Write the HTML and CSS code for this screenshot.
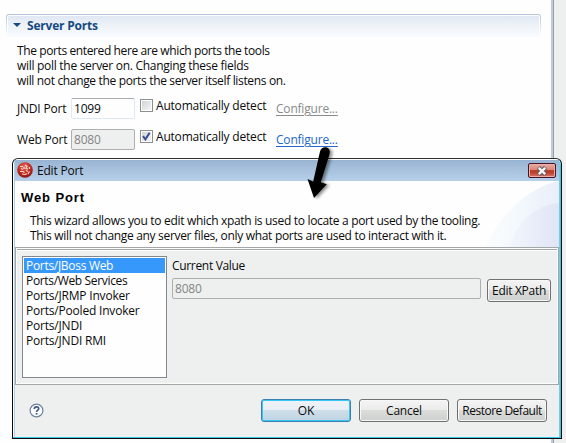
FILE: index.html
```html
<!DOCTYPE html>
<html lang="en">
<head>
<meta charset="utf-8">
<title>Server Ports</title>
<link rel="stylesheet" href="styles.css">
</head>
<body>
<main class="editor">
  <section class="ports">
    <h1 class="section-title"><span class="twistie"></span><span>Server Ports</span></h1>
    <p class="intro"><span class="tight">The ports entered here are which ports the tools</span><br><span class="snug">will poll the server on. Changing these fields</span><br><span class="close-set">will not change the ports the server itself listens on.</span></p>
    <div class="row">
      <span class="label">JNDI Port</span>
      <span class="field">1099</span>
      <span class="check"></span>
      <span class="auto">Automatically detect</span>
      <a class="link muted">Configure...</a>
    </div>
    <div class="row">
      <span class="label">Web Port</span>
      <span class="field disabled">8080</span>
      <span class="check"><svg width="9" height="9" viewBox="0 0 9 9"><path d="M1 4.2 3.4 7.4 7.6 .8" fill="none" stroke="#3a4f93" stroke-width="2"/></svg></span>
      <span class="auto">Automatically detect</span>
      <a class="link">Configure...</a>
    </div>
  </section>
</main>

<div class="dialog">
  <div class="frame">
    <header class="titlebar">
      <svg class="logo" width="16" height="16" viewBox="0 0 16 16"><defs><radialGradient id="ball" cx=".45" cy=".3" r=".7"><stop offset="0" stop-color="#e8705f"/><stop offset=".55" stop-color="#c52c22"/><stop offset="1" stop-color="#8d1712"/></radialGradient></defs><circle cx="8" cy="8" r="7.8" fill="url(#ball)"/><path d="M3 4.500h3M4 6.500l2 1M3 9.500h3l1.500 1M8 3l2 1.500-1 2 2 .5M12.500 5v2M9 8.500l2 1M12.500 9.500l-1.500 2.500M5 12l3 .5 2-.8M7 5v2" fill="none" stroke="#f8d8cf" stroke-width="1.200"/></svg>
      <span class="caption">Edit Port</span>
      <span class="close"><svg width="12" height="10" viewBox="0 0 12 10"><path d="M2.500 1.500 9.500 8.500M9.500 1.500 2.500 8.500" stroke="#565c6b" stroke-width="4.400"/><path d="M2.800 1.800 9.200 8.200M9.200 1.800 2.800 8.200" stroke="#f5f5f1" stroke-width="2.400"/></svg></span>
    </header>
    <section class="banner">
      <svg class="swoosh" width="74" height="66" viewBox="0 0 74 66"><defs><linearGradient id="s1"><stop offset="0" stop-color="#fafdfe"/><stop offset=".5" stop-color="#f3f8fd"/><stop offset="1" stop-color="#e9eef9"/></linearGradient><linearGradient id="s2"><stop offset="0" stop-color="#f1f6fd"/><stop offset="1" stop-color="#e0e4f4"/></linearGradient></defs><path d="M0 66C14 36 42 6 74 0V66Z" fill="url(#s1)"/><path d="M25 66C31 42 48 25 74 22V66Z" fill="url(#s2)"/></svg>
      <h2 class="heading">Web Port</h2>
      <p class="about"><span>This wizard allows you to edit which xpath is used to locate a port used by the tooling.</span><br><span>This will not change any server files, only what ports are used to interact with it.</span></p>
    </section>
    <section class="body">
      <ul class="list">
        <li class="selected">Ports/JBoss Web</li>
        <li class="close-set">Ports/Web Services</li>
        <li>Ports/JRMP Invoker</li>
        <li>Ports/Pooled Invoker</li>
        <li>Ports/JNDI</li>
        <li>Ports/JNDI RMI</li>
      </ul>
      <div class="value">
        <div class="value-label">Current Value</div>
        <div class="value-row"><span class="field disabled">8080</span><span class="button edit">Edit XPath</span></div>
      </div>
    </section>
    <footer class="actions">
      <svg class="help" width="15" height="15" viewBox="0 0 15 15"><circle cx="7.500" cy="7.500" r="6.400" fill="#fafcfe" stroke="#70819f" stroke-width="1.200"/><path d="M5.300 5.900C5.300 3.200 9.700 3.200 9.700 5.700 9.700 7.200 7.600 7.200 7.600 9" fill="none" stroke="#435a86" stroke-width="1.700"/><path d="M6.700 10h1.800v1.600H6.700z" fill="#435a86"/></svg>
      <span class="button ok">OK</span>
      <span class="button cancel">Cancel</span>
      <span class="button restore">Restore Default</span>
    </footer>
  </div>
</div>

<svg class="arrow" width="40" height="60" viewBox="0 0 40 60"><defs><filter id="sh" x="-30%" y="-30%" width="170%" height="170%"><feDropShadow dx="2.500" dy="1" stdDeviation="1.500" flood-color="#000" flood-opacity=".45"/></filter></defs><g filter="url(#sh)"><path d="M24 11.500C25 7 30 6 32.500 8.500 34.200 10.500 34 12.500 33.300 15L24.800 42.200 30.800 44.200 18 58 11.500 39 17.200 41.500Z" fill="#050505"/></g></svg>
</body>
</html>
```
FILE: styles.css
```css
* { box-sizing: border-box; }
body {
  margin: 0;
  width: 566px;
  height: 443px;
  overflow: hidden;
  position: relative;
  background: #eef0ef;
  color: #0b0b0b;
  font: 12px/15px "Open Sans", "Noto Sans", sans-serif;
  letter-spacing: -0.2px;
  white-space: nowrap;
}
h1, h2, p, ul { margin: 0; padding: 0; font-size: inherit; }
.snug { letter-spacing: -0.29px; }
.close-set { letter-spacing: -0.34px; }
.tight { letter-spacing: -0.39px; }
.editor {
  width: 554px;
  height: 443px;
  background: #fefefe;
  border-right: 1px solid #9a9fa3;
  box-shadow: inset -2px 0 #c0cbe0;
  padding: 14px 12px 0 6px;
}
.section-title {
  display: flex;
  align-items: center;
  height: 23px;
  border: 1px solid transparent;
  border-top-color: #b4c5df;
  border-bottom: 0;
  border-radius: 3px 3px 0 0;
  background: linear-gradient(#dfe6f2, #eef3f8 50%, #f8fbff) padding-box, linear-gradient(#b4c5df, #fefefe) border-box;
  box-shadow: inset 0 1px #fefefe, inset -1px 0 #fefefe, inset 1px 0 #fefefe;
  color: #164a80;
  font-weight: 700;
  padding: 0 0 2px 6px;
}
.twistie {
  width: 8px;
  height: 4px;
  margin-right: 6px;
  background: #164a80;
  clip-path: polygon(0 0, 100% 0, 50% 100%);
}
.intro { padding: 6px 0 0 11px; }
.row {
  display: grid;
  grid-template-columns: 54px 64px 13px 120px 70px;
  align-items: start;
  height: 31px;
  padding-left: 11px;
}
.intro + .row { margin-top: 10px; }
.label { padding-top: 3px; }
.field {
  height: 21px;
  border: 1px solid #dfe8f6;
  border-top-color: #abadb3;
  border-radius: 2px;
  padding: 2px 0 0 2px;
  background: #fefefe;
}
.disabled { background: #eef0ef; border-color: #afafaf; color: #858585; }
.check {
  width: 13px;
  height: 13px;
  margin: 1px 0 0 5px;
  border: 1px solid #8e8f8f;
  background: linear-gradient(135deg, #cfd3d7, #f6f6f6) content-box #f4f4f4;
  padding: 1px;
  display: flex;
}
.auto { padding-left: 8px; }
.link { color: #2267c9; text-decoration: underline; text-underline-offset: 2px; padding: 3px 0 0 8px; }
.muted { color: #8a8a8a; }

.dialog {
  position: absolute;
  left: 12px;
  top: 158px;
  width: 550px;
  height: 281px;
  border: 1px solid #090909;
  border-radius: 6px 6px 0 0;
  background: linear-gradient(90deg, #fafeff 0 1px, #b5d0eb 1px 2px, #b5d0eb 546px, #35c8e8 547px);
  border-top-color: #303030;
  padding: 1px 2px 2px;
  box-shadow: inset 0 -1px #35c8e8, inset 0 1px #fafeff;
  overflow: hidden;
}
.frame { height: 276px; }
.titlebar {
  display: flex;
  height: 21px;
  padding: 2px 2px 0;
  background: linear-gradient(#99b4d3, #b7d0ea);
}
.caption { margin-left: 4px; padding-top: 1px; }
.close {
  display: flex;
  align-items: center;
  justify-content: center;
  width: 28px;
  height: 15px;
  margin: 1px 1px 0 auto;
  border: 1px solid #471329;
  border-radius: 2px;
  background: linear-gradient(#e8aaa1, #d98778 45%, #bd3f28 46%, #bd3f28 65%, #d7776a);
  box-shadow: inset 0 0 0 1px #e8b0a6;
}
.banner { position: relative; height: 66px; background: #fefefe; padding: 8px 0 0 6px; }
.swoosh { position: absolute; right: 0; top: 0; }
.heading {
  position: relative;
  font: 700 13px/17px "Liberation Sans", sans-serif;
  letter-spacing: .9px;
  color: #000;
}
.about { position: relative; padding: 7px 0 0 9px; letter-spacing: -0.315px; }
.body {
  display: flex;
  height: 138px;
  border: 1px solid #a5a7a6;
  background: #eef0ef;
  box-shadow: inset 0 0 0 1px #fdfdfd, inset 0 2px #a5a7a6, inset 0 3px #fdfdfd;
  padding: 8px 7px 0 6px;
  gap: 5px;
}
.list {
  list-style: none;
  width: 145px;
  height: 122px;
  border: 1px solid #828790;
  background: #fefefe;
  padding: 1px;
}
.list li { height: 15px; padding-left: 2px; }
.selected { background: #3798fb; color: #fefefe; letter-spacing: -0.3px; }
.value { flex: 1; padding-top: 2px; }
.value-label { letter-spacing: -0.32px; }
.value-row { display: flex; gap: 6px; margin-top: 5px; }
.value-row .field { width: 309px; }
.button {
  display: flex;
  align-items: center;
  justify-content: center;
  height: 23px;
  border: 1px solid #707070;
  border-radius: 3px;
  background: linear-gradient(#f3f4f3, #eaebea 48%, #dbdddb 50%, #cdcfce);
  box-shadow: inset 0 0 0 1px #f8f8f8;
}
.edit { width: 64px; margin-top: 1px; letter-spacing: -0.3px; padding-bottom: 1px; }
.actions {
  display: flex;
  height: 52px;
  padding: 14px 12px 0 14px;
  background: #eef0ef;
}
.help { margin-top: 4px; }
.actions .button { width: 90px; margin-left: 8px; }
.actions .restore { letter-spacing: -0.5px; }
.actions .ok {
  margin-left: auto;
  border-color: #3c7fb1;
  background: linear-gradient(#edf3f8, #e7eef4 48%, #cfdfea 50%, #bfd3e2);
  box-shadow: inset 0 0 0 1px #35c8f4;
}
.arrow { position: absolute; left: 296px; top: 140px; }
```
